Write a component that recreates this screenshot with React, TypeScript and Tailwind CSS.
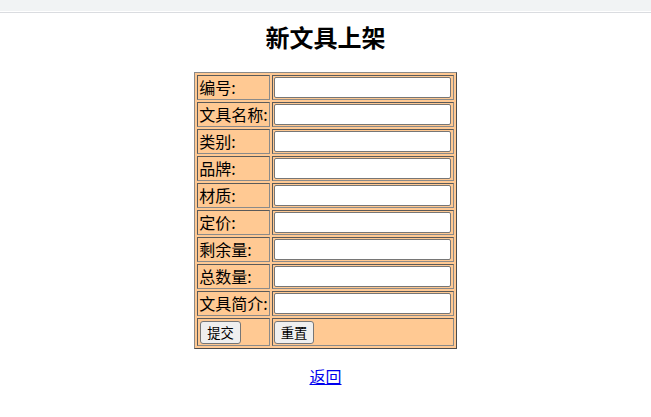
import React from "react";

const fields = ["编号:", "文具名称:", "类别:", "品牌:", "材质:", "定价:", "剩余量:", "总数量:", "文具简介:"];

const cellBorder =
  "border border-solid border-t-[#5a5a5a] border-l-[#5a5a5a] border-r-[#8a8a8a] border-b-[#8a8a8a] p-[1px]";

export default function App() {
  return (
    <div
      className="min-h-[417px] bg-white text-black"
      style={{ fontFamily: '"Noto Sans CJK SC", "Noto Sans", sans-serif' }}
    >
      <div className="h-[11px] bg-[#f1f3f4]" />
      <div className="h-[2px] bg-white border-b border-[#dadce0]" />
      <h2 className="mt-[6px] text-center text-[24px] font-bold leading-[35px]">新文具上架</h2>
      <table className="mx-auto mt-[18px] border-separate border-spacing-[2px] bg-[#ffc993] border border-solid border-t-[#8a8a8a] border-l-[#8a8a8a] border-r-[#4a4a4a] border-b-[#4a4a4a]">
        <tbody>
          {fields.map((f) => (
            <tr key={f}>
              <td className={`${cellBorder} w-[72px] h-[25px] align-middle text-[16px] leading-[21px] whitespace-nowrap`}>
                {f}
              </td>
              <td className={`${cellBorder} w-[182px] h-[25px] align-middle`}>
                <input
                  type="text"
                  className="block w-[177px] h-[21px] bg-white border border-solid border-[#767676] rounded-[2px] px-[2px] text-[13px] outline-none"
                />
              </td>
            </tr>
          ))}
          <tr>
            <td className={`${cellBorder} w-[72px] h-[28px] align-middle`}>
              <button className="block h-[23px] px-[6px] bg-[#efefef] border border-solid border-[#767676] rounded-[3px] text-[13.33px] leading-[19px] ml-[1px]">
                提交
              </button>
            </td>
            <td className={`${cellBorder} w-[182px] h-[28px] align-middle`}>
              <button className="block h-[23px] px-[6px] bg-[#efefef] border border-solid border-[#767676] rounded-[3px] text-[13.33px] leading-[19px]">
                重置
              </button>
            </td>
          </tr>
        </tbody>
      </table>
      <p className="mt-[16px] text-center text-[16px] leading-[23px]">
        <a href="#" className="text-[#0000ee] underline">
          返回
        </a>
      </p>
    </div>
  );
}
